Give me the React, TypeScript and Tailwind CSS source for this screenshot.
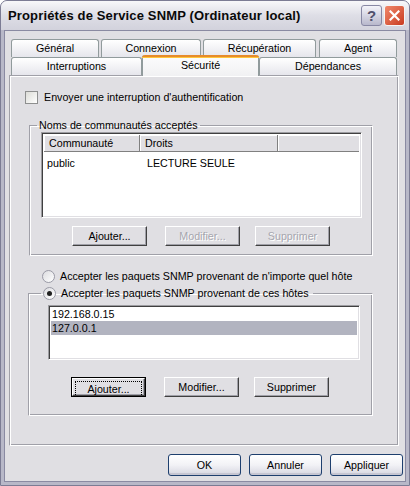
import React from "react";

/* Windows XP (silver) "Propriétés de Service SNMP" dialog, Sécurité tab */

const TAB_ROW_1 = [
  { label: "Général", w: "w-[88px]" },
  { label: "Connexion", w: "w-[100px]" },
  { label: "Récupération", w: "w-[113px]" },
  { label: "Agent", w: "w-[78px]" },
] as const;

function BackTab({ label, w }: { label: string; w: string }) {
  return (
    <div
      className={`${w} h-full flex items-center justify-center rounded-t-[3px] border border-b-0 border-[#919b9c] bg-gradient-to-b from-white to-[#e6e6ec] text-black`}
    >
      {label}
    </div>
  );
}

function ClassicButton({
  label,
  disabled,
  focused,
}: {
  label: string;
  disabled?: boolean;
  focused?: boolean;
}) {
  return (
    <div
      className={`w-[75px] h-[20px] ${
        focused ? "border border-black" : ""
      } bg-[#e0dfe3]`}
    >
      <div className="h-full border border-t-white border-l-white border-b-[#404040] border-r-[#404040] shadow-[inset_-1px_-1px_0_#a0a0a8]">
        <div
          className={`h-full flex items-center justify-center ${
            focused ? "m-[2px] h-[calc(100%-4px)] border border-dotted border-black" : ""
          } ${disabled ? "text-[#a6a6ae] [text-shadow:1px_1px_0_#fff]" : "text-black"}`}
        >
          {label}
        </div>
      </div>
    </div>
  );
}

function XpButton({ label }: { label: string }) {
  return (
    <div className="w-[73px] h-[22px] flex items-center justify-center rounded-[3px] border border-[#1e3f6e] bg-gradient-to-b from-white via-[#f2f2f6] to-[#d6d6e0] shadow-[inset_0_-2px_0_#c6c6d2]">
      {label}
    </div>
  );
}

function Radio({ checked }: { checked?: boolean }) {
  return (
    <div className="w-[13px] h-[13px] shrink-0 rounded-full border border-[#9a9aa6] bg-gradient-to-br from-[#dcdce0] to-white flex items-center justify-center">
      {checked && <div className="w-[5px] h-[5px] rounded-full bg-[#202020]" />}
    </div>
  );
}

export default function App() {
  return (
    <div className="w-[410px] h-[486px] flex flex-col rounded-t-[7px] border border-[#7c7c94] bg-[#b8b8c8] font-['Liberation_Sans',Arial,sans-serif] text-[10.7px] leading-[13px] text-black overflow-hidden">
      {/* ─── Title bar ─── */}
      <div className="h-[29px] shrink-0 flex items-center pl-[7px] pr-[4px] bg-gradient-to-b from-[#f8f8fa] via-[#dedee6] to-[#d2d2dc]">
        <span className="font-bold text-[13px] tracking-[0.15px] text-[#0a0a0a]">
          Propriétés de Service SNMP (Ordinateur local)
        </span>
        <div className="ml-auto flex gap-[2px]">
          <div className="w-[21px] h-[21px] rounded-[3px] border border-[#8888a4] bg-gradient-to-b from-[#f4f4fa] to-[#b8b8cc] flex items-center justify-center text-[15px] font-bold text-[#50506c]">
            ?
          </div>
          <div className="w-[21px] h-[21px] rounded-[3px] border border-[#f4f4f4] bg-gradient-to-br from-[#f0876a] to-[#c8391e] flex items-center justify-center">
            <svg width="11" height="11" viewBox="0 0 11 11">
              <path d="M1.5 1.5 L9.5 9.5 M9.5 1.5 L1.5 9.5" stroke="#fff" strokeWidth="2.2" strokeLinecap="square" />
            </svg>
          </div>
        </div>
      </div>

      {/* ─── Client area ─── */}
      <div className="flex-1 mx-[3px] mb-[3px] border border-[#8a8aa2] bg-[#e0dfe3] flex flex-col">
        <div className="ml-[4px] mt-[8px] w-[390px]">
          {/* Back row of tabs */}
          <div className="h-[18px] flex pl-[2px] gap-[2px]">
            {TAB_ROW_1.map((t, i) => (
              <div key={t.label} className={i === 3 ? "ml-[1px] h-full" : "h-full"}>
                <BackTab label={t.label} w={t.w} />
              </div>
            ))}
          </div>
          {/* Front row of tabs */}
          <div className="h-[18px] flex items-end pl-[2px]">
            <BackTab label="Interruptions" w="w-[131px]" />
            <div className="relative z-10 w-[117px] h-[21px] -mb-[1px] rounded-t-[3px] border-x border-[#919b9c] bg-gradient-to-b from-[#fdfdfd] to-[#f1f1f3] flex flex-col">
              <div className="h-[3px] -mx-[1px] rounded-t-[3px] bg-[#e68b2c] border-b border-[#ffc73c]" />
              <div className="flex-1 flex justify-center pt-[1px]">Sécurité</div>
            </div>
            <BackTab label="Dépendances" w="w-[138px]" />
          </div>

          {/* Tab panel */}
          <div className="h-[371px] border border-t-[#a0a0a8] border-l-[#a0a0a8] border-b-white border-r-white shadow-[inset_1px_1px_0_#fff,inset_-1px_-1px_0_#a0a0a8] bg-[#e0dfe3] flex flex-col">
            {/* Checkbox */}
            <div className="mt-[15px] ml-[15px] flex items-center gap-[6px]">
              <div className="w-[13px] h-[13px] border border-[#8e8f8f] bg-gradient-to-br from-[#dcdcd7] to-white" />
              <span>Envoyer une interruption d'authentification</span>
            </div>

            {/* Group: communities */}
            <fieldset className="ml-[19px] mt-[15px] w-[344px] h-[137px] border border-t-[#a0a0a8] border-l-[#a0a0a8] border-b-white border-r-white shadow-[inset_1px_1px_0_#fff,inset_-1px_-1px_0_#a0a0a8]">
              <legend className="ml-[7px] px-[2px]">Noms de communautés acceptés</legend>
              <div className="ml-[11px] w-[321px] h-[86px] border border-t-[#9d9da1] border-l-[#9d9da1] border-b-white border-r-white shadow-[inset_1px_1px_0_#404040,inset_-1px_-1px_0_#e0dfe3] bg-white p-[2px] flex flex-col">
                <div className="h-[17px] flex bg-[#e0dfe3]">
                  <div className="w-[96px] pl-[5px] flex items-center border-r border-b border-r-[#808080] border-b-[#808080] shadow-[inset_1px_1px_0_#fff]">
                    Communauté
                  </div>
                  <div className="w-[138px] pl-[5px] flex items-center border-r border-b border-r-[#808080] border-b-[#808080] shadow-[inset_1px_1px_0_#fff]">
                    Droits
                  </div>
                  <div className="flex-1 border-b border-b-[#808080] shadow-[inset_1px_1px_0_#fff]" />
                </div>
                <div className="flex h-[14px] mt-[4px] items-center">
                  <span className="w-[96px] pl-[3px]">public</span>
                  <span className="pl-[7px]">LECTURE SEULE</span>
                </div>
              </div>
              <div className="mt-[8px] ml-[42px] flex gap-[18px]">
                <ClassicButton label="Ajouter..." />
                <div className="flex gap-[15px]">
                  <ClassicButton label="Modifier..." disabled />
                  <ClassicButton label="Supprimer" disabled />
                </div>
              </div>
            </fieldset>

            {/* Radio: any host */}
            <div className="mt-[14px] ml-[32px] flex items-center gap-[5px]">
              <Radio />
              <span>Accepter les paquets SNMP provenant de n'importe quel hôte</span>
            </div>

            {/* Group: these hosts */}
            <fieldset className="ml-[18px] mt-[4px] w-[345px] h-[129px] border border-t-[#a0a0a8] border-l-[#a0a0a8] border-b-white border-r-white shadow-[inset_1px_1px_0_#fff,inset_-1px_-1px_0_#a0a0a8]">
              <legend className="ml-[12px] px-[2px] flex items-center gap-[5px]">
                <Radio checked />
                <span className="pr-[2px]">Accepter les paquets SNMP provenant de ces hôtes</span>
              </legend>
              <div className="mt-[5px] ml-[19px] w-[312px] h-[55px] border border-t-[#9d9da1] border-l-[#9d9da1] border-b-white border-r-white shadow-[inset_1px_1px_0_#404040,inset_-1px_-1px_0_#e0dfe3] bg-white p-[2px] flex flex-col">
                <div className="h-[13px] pl-[1px] flex items-center">192.168.0.15</div>
                <div className="h-[14px] pl-[1px] flex items-center bg-[#b2b4c0]">127.0.0.1</div>
              </div>
              <div className="mt-[17px] ml-[42px] flex gap-[18px]">
                <ClassicButton label="Ajouter..." focused />
                <div className="flex gap-[15px]">
                  <ClassicButton label="Modifier..." />
                  <ClassicButton label="Supprimer" />
                </div>
              </div>
            </fieldset>
          </div>
        </div>

        {/* Dialog buttons */}
        <div className="mt-[8px] mr-[2px] flex justify-end gap-[8px]">
          <XpButton label="OK" />
          <XpButton label="Annuler" />
          <XpButton label="Appliquer" />
        </div>
      </div>
    </div>
  );
}
